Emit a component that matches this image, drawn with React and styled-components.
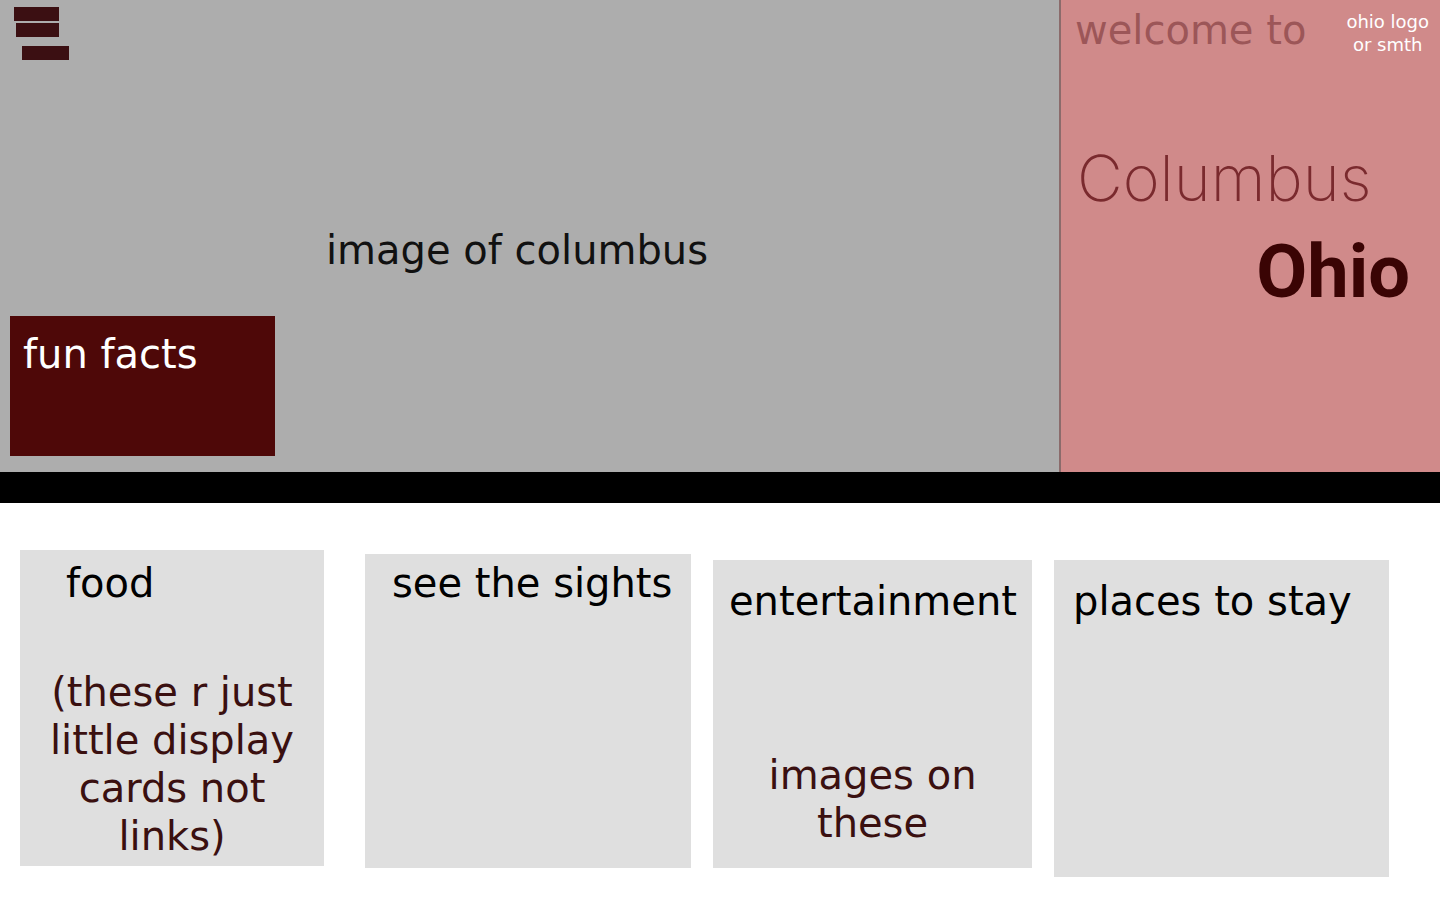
import React from "react";
import styled, { createGlobalStyle } from "styled-components";

const GlobalStyle = createGlobalStyle`
  body {
    margin: 0;
    background: #ffffff;
    font-family: "DejaVu Sans", Verdana, sans-serif;
  }
`;

const cards = [
  {
    title: "food",
    w: 304,
    h: 316,
    top: 0,
    gap: 0,
    padTop: 9,
    padLeft: 46,
    note: "(these r just little display cards not links)",
    noteGap: 61,
  },
  { title: "see the sights", w: 326, h: 314, top: 4, gap: 41, padTop: 5, padLeft: 27 },
  {
    title: "entertainment",
    w: 319,
    h: 308,
    top: 10,
    gap: 22,
    padTop: 17,
    padLeft: 16,
    note: "images on these",
    noteGap: 126,
  },
  { title: "places to stay", w: 335, h: 317, top: 10, gap: 22, padTop: 17, padLeft: 19 },
];

const App = () => {
  return (
    <Page>
      <GlobalStyle />
      <Hero>
        <ImageArea>
          <Menu>
            <Bar w={45} />
            <Bar w={43} shift={2} drop={2} />
            <Bar w={47} shift={8} drop={9} />
          </Menu>
          <Caption>image of columbus</Caption>
          <FunFacts>fun facts</FunFacts>
        </ImageArea>
        <Welcome>
          <WelcomeTop>
            <WelcomeText>welcome to</WelcomeText>
            <LogoText>
              ohio logo
              <br />
              or smth
            </LogoText>
          </WelcomeTop>
          <City>Columbus</City>
          <State>Ohio</State>
        </Welcome>
      </Hero>
      <Divider />
      <CardRow>
        {cards.map((c) => (
          <Card
            key={c.title}
            w={c.w}
            h={c.h}
            top={c.top}
            gap={c.gap}
            padTop={c.padTop}
          >
            <CardTitle padLeft={c.padLeft}>{c.title}</CardTitle>
            {c.note && <CardNote noteGap={c.noteGap}>{c.note}</CardNote>}
          </Card>
        ))}
      </CardRow>
    </Page>
  );
};

export default App;

// page
const Page = styled.div`
  width: 1440px;
  min-height: 900px;
  background: #ffffff;
`;

// top section
const Hero = styled.div`
  display: grid;
  grid-template-columns: 1059px 1fr;
  height: 472px;
`;

// grey image placeholder
const ImageArea = styled.div`
  display: flex;
  flex-direction: column;
  align-items: flex-start;
  background: #adadad;
`;

// hamburger
const Menu = styled.div`
  display: flex;
  flex-direction: column;
  padding: 7px 0 0 14px;
`;

const Bar = styled.div`
  width: ${(p) => p.w}px;
  height: 14px;
  margin-left: ${(p) => p.shift || 0}px;
  margin-top: ${(p) => p.drop || 0}px;
  background: #3b0f12;
`;

const Caption = styled.div`
  margin: 166px 0 0 326px;
  font-size: 40px;
  line-height: 48px;
  color: #111111;
`;

const FunFacts = styled.div`
  box-sizing: border-box;
  width: 265px;
  height: 140px;
  margin: 42px 0 0 10px;
  padding: 14px 13px;
  background: #4e0808;
  color: #ffffff;
  font-size: 40px;
  line-height: 48px;
`;

// pink side panel
const Welcome = styled.div`
  display: flex;
  flex-direction: column;
  background: #d08a8a;
  border-left: 2px solid #8b6b6b;
`;

const WelcomeTop = styled.div`
  display: flex;
  justify-content: space-between;
  align-items: flex-start;
  padding: 0 11px 0 14px;
`;

const WelcomeText = styled.div`
  margin-top: 6px;
  font-size: 40px;
  line-height: 48px;
  color: #9c5658;
`;

const LogoText = styled.div`
  margin-top: 10px;
  font-size: 18px;
  line-height: 23px;
  text-align: center;
  color: #ffffff;
`;

const City = styled.div`
  margin: 84px 0 0 16px;
  font-family: Inter, "Lato", sans-serif;
  font-weight: 200;
  font-size: 63px;
  line-height: 76px;
  color: #7a2a2e;
`;

const State = styled.div`
  align-self: flex-end;
  margin: 12px 30px 0 0;
  font-family: Roboto, "Liberation Sans", sans-serif;
  font-weight: 700;
  font-size: 74px;
  color: #3a0404;
`;

// black band
const Divider = styled.div`
  height: 31px;
  background: #000000;
`;

// card list
const CardRow = styled.div`
  display: flex;
  align-items: flex-start;
  padding: 47px 0 0 20px;
`;

const Card = styled.div`
  box-sizing: border-box;
  display: flex;
  flex-direction: column;
  width: ${(p) => p.w}px;
  height: ${(p) => p.h}px;
  margin-top: ${(p) => p.top}px;
  margin-left: ${(p) => p.gap}px;
  padding-top: ${(p) => p.padTop}px;
  background: #dfdfdf;
`;

const CardTitle = styled.div`
  padding-left: ${(p) => p.padLeft}px;
  font-size: 40px;
  line-height: 48px;
  color: #000000;
  white-space: nowrap;
`;

const CardNote = styled.div`
  margin-top: ${(p) => p.noteGap}px;
  padding: 0 12px;
  font-size: 40px;
  line-height: 48px;
  text-align: center;
  color: #3a1010;
`;
